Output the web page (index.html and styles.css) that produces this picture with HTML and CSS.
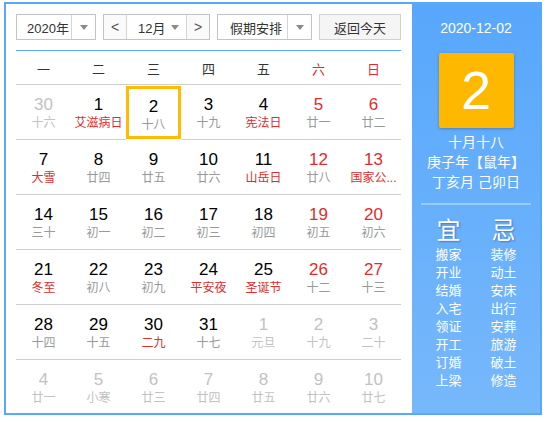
FILE: index.html
```html
<!DOCTYPE html>
<html lang="zh">
<head>
<meta charset="utf-8">
<link rel="stylesheet" href="styles.css">
</head>
<body>
<div class="cal">
  <div class="main">
    <div class="toolbar">
      <div class="sel sel-year"><span class="sel-text">2020年</span><span class="sel-arrow"><i class="tri"></i></span></div>
      <div class="month-group">
        <span class="nav">&lt;</span>
        <span class="month"><span class="sel-text">12月</span><i class="tri"></i></span>
        <span class="nav">&gt;</span>
      </div>
      <div class="sel sel-holiday"><span class="sel-text">假期安排</span><span class="sel-arrow"><i class="tri"></i></span></div>
      <div class="btn">返回今天</div>
    </div>
    <div class="grid">
      <div class="wk">一</div><div class="wk">二</div><div class="wk">三</div><div class="wk">四</div><div class="wk">五</div><div class="wk red">六</div><div class="wk red">日</div>

      <div class="d other"><b>30</b><s>十六</s></div>
      <div class="d"><b>1</b><s class="fest">艾滋病日</s></div>
      <div class="d cur"><b>2</b><s>十八</s></div>
      <div class="d"><b>3</b><s>十九</s></div>
      <div class="d"><b>4</b><s class="fest">宪法日</s></div>
      <div class="d we"><b>5</b><s>廿一</s></div>
      <div class="d we"><b>6</b><s>廿二</s></div>

      <div class="d"><b>7</b><s class="fest">大雪</s></div>
      <div class="d"><b>8</b><s>廿四</s></div>
      <div class="d"><b>9</b><s>廿五</s></div>
      <div class="d"><b>10</b><s>廿六</s></div>
      <div class="d"><b>11</b><s class="fest">山岳日</s></div>
      <div class="d we"><b>12</b><s>廿八</s></div>
      <div class="d we"><b>13</b><s class="fest">国家公...</s></div>

      <div class="d"><b>14</b><s>三十</s></div>
      <div class="d"><b>15</b><s>初一</s></div>
      <div class="d"><b>16</b><s>初二</s></div>
      <div class="d"><b>17</b><s>初三</s></div>
      <div class="d"><b>18</b><s>初四</s></div>
      <div class="d we"><b>19</b><s>初五</s></div>
      <div class="d we"><b>20</b><s>初六</s></div>

      <div class="d"><b>21</b><s class="fest">冬至</s></div>
      <div class="d"><b>22</b><s>初八</s></div>
      <div class="d"><b>23</b><s>初九</s></div>
      <div class="d"><b>24</b><s class="fest">平安夜</s></div>
      <div class="d"><b>25</b><s class="fest">圣诞节</s></div>
      <div class="d we"><b>26</b><s>十二</s></div>
      <div class="d we"><b>27</b><s>十三</s></div>

      <div class="d"><b>28</b><s>十四</s></div>
      <div class="d"><b>29</b><s>十五</s></div>
      <div class="d"><b>30</b><s class="fest">二九</s></div>
      <div class="d"><b>31</b><s>十七</s></div>
      <div class="d other"><b>1</b><s>元旦</s></div>
      <div class="d other"><b>2</b><s>十九</s></div>
      <div class="d other"><b>3</b><s>二十</s></div>

      <div class="d other last"><b>4</b><s>廿一</s></div>
      <div class="d other last"><b>5</b><s>小寒</s></div>
      <div class="d other last"><b>6</b><s>廿三</s></div>
      <div class="d other last"><b>7</b><s>廿四</s></div>
      <div class="d other last"><b>8</b><s>廿五</s></div>
      <div class="d other last"><b>9</b><s>廿六</s></div>
      <div class="d other last"><b>10</b><s>廿七</s></div>
    </div>
  </div>
  <div class="side">
    <div class="side-date">2020-12-02</div>
    <div class="big-day">2</div>
    <div class="lunar">
      <div>十月十八</div>
      <div>庚子年【鼠年】</div>
      <div>丁亥月 己卯日</div>
    </div>
    <div class="divider"></div>
    <div class="yiji">
      <div class="col">
        <div class="yj-title">宜</div>
        <div>搬家</div><div>开业</div><div>结婚</div><div>入宅</div><div>领证</div><div>开工</div><div>订婚</div><div>上梁</div>
      </div>
      <div class="col">
        <div class="yj-title">忌</div>
        <div>装修</div><div>动土</div><div>安床</div><div>出行</div><div>安葬</div><div>旅游</div><div>破土</div><div>修造</div>
      </div>
    </div>
  </div>
</div>
</body>
</html>
```

FILE: styles.css
```css
* { box-sizing: border-box; }
html, body { margin: 0; padding: 0; background: #fff; }
body {
  font-family: "Liberation Sans", "Noto Sans CJK SC", Arial, sans-serif;
  font-size: 13px;
  color: #333;
}
.cal {
  margin: 2px 0 0 4px;
  width: 538px;
  height: 413px;
  border: 2px solid #5aa8fb;
  display: flex;
  overflow: hidden;
}
.main {
  width: 406px;
  padding: 10px 11px 0 10px;
  display: flex;
  flex-direction: column;
}
.toolbar {
  display: flex;
  gap: 7px;
  height: 26px;
}
.sel, .month-group, .btn {
  height: 26px;
  border: 1px solid #c3c3c3;
  background: #fff;
  display: flex;
  align-items: center;
  color: #333;
}
.sel-year { width: 80px; }
.sel-holiday { width: 95px; }
.sel-text { padding-left: 10px; flex: 1; white-space: nowrap; }
.sel-holiday .sel-text { padding-left: 12px; }
.sel-arrow {
  width: 24px;
  height: 100%;
  border-left: 1px solid #d4d4d4;
  display: flex;
  align-items: center;
  justify-content: center;
}
.tri {
  display: block;
  width: 0;
  height: 0;
  border-left: 4px solid transparent;
  border-right: 4px solid transparent;
  border-top: 5px solid #8a8a8a;
}
.month-group { width: 107px; }
.nav {
  width: 22px;
  height: 100%;
  display: flex;
  align-items: center;
  justify-content: center;
  color: #555;
  font-size: 14px;
  background: #fafafa;
}
.month {
  flex: 1;
  height: 100%;
  display: flex;
  align-items: center;
  border-left: 1px solid #d4d4d4;
  border-right: 1px solid #d4d4d4;
  padding-right: 7px;
}
.month .sel-text { padding-left: 11px; }
.btn {
  width: 82px;
  justify-content: center;
  background: #f5f5f5;
  border-color: #d2d2d2;
}
.grid {
  margin-top: 10px;
  border-top: 1px solid #5aa8fb;
  display: grid;
  grid-template-columns: repeat(7, 55px);
}
.wk {
  height: 34px;
  border-bottom: 1px solid #cfcfcf;
  display: flex;
  align-items: center;
  justify-content: center;
  color: #333;
  padding-top: 1px;
}
.wk.red { color: #e02c2c; }
.d {
  height: 55px;
  border-bottom: 1px solid #cfcfcf;
  display: flex;
  flex-direction: column;
  align-items: center;
  padding-top: 10px;
}
.d.last { border-bottom: none; height: 54px; }
.d b {
  font-weight: normal;
  font-size: 17px;
  line-height: 20px;
  color: #000;
}
.d s {
  text-decoration: none;
  font-size: 12px;
  line-height: 17px;
  color: #999;
  white-space: nowrap;
}
.d.we b { color: #e02c2c; }
.d s.fest { color: #e02c2c; }
.d.other b, .d.other s { color: #c2c2c2; }
.d.cur {
  border: 3px solid #ffbb00;
  margin: 1px 0;
  height: 53px;
  padding-top: 8px;
}
.side {
  width: 130px;
  background: linear-gradient(#57a7fc, #77b8fb);
  color: #fff;
  display: flex;
  flex-direction: column;
  align-items: center;
  padding-top: 14px;
}
.side-date { font-size: 14px; line-height: 20px; }
.big-day {
  margin-top: 15px;
  width: 75px;
  height: 75px;
  background: #ffb800;
  border-radius: 2px;
  box-shadow: 0 1px 3px rgba(0,0,0,0.25);
  font-size: 54px;
  line-height: 75px;
  text-align: center;
  color: #fff;
}
.lunar {
  margin-top: 4px;
  font-size: 14px;
  line-height: 20px;
  text-align: center;
}
.divider {
  margin-top: 11px;
  width: 110px;
  height: 2px;
  background: rgba(255,255,255,0.35);
}
.yiji {
  display: flex;
  margin-top: 12px;
}
.col {
  width: 55px;
  text-align: center;
  font-size: 13px;
  line-height: 18px;
}
.yj-title {
  font-size: 24px;
  line-height: 28px;
  margin-bottom: 1px;
  text-shadow: 1px 1px 2px rgba(0,0,60,0.35);
}
```
